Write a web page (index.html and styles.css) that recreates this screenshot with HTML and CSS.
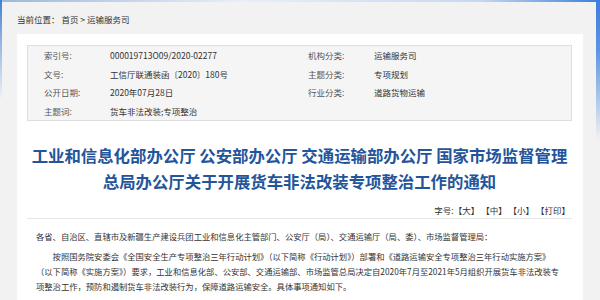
FILE: index.html
```html
<!DOCTYPE html>
<html lang="zh-CN">

<head>
    <meta charset="UTF-8">
    <meta name="viewport" content="width=device-width, initial-scale=1.0">
    <title>关于开展货车非法改装专项整治工作的通知</title>
    <link rel="stylesheet" href="styles.css">
</head>

<body>
    <div class="crumb">当前位置： <a href="#">首页</a> &gt; <a href="#">运输服务司</a></div>
    <div class="panel">
        <div class="meta">
            <span class="label">索引号:</span><span>000019713O09/2020-02277</span>
            <span class="label">机构分类:</span><span>运输服务司</span>
            <span class="label">文号:</span><span>工信厅联通装函〔2020〕180号</span>
            <span class="label">主题分类:</span><span>专项规划</span>
            <span class="label">公开日期:</span><span>2020年07月28日</span>
            <span class="label">行业分类:</span><span>道路货物运输</span>
            <span class="label">主题词:</span><span>货车非法改装;专项整治</span>
            <span></span><span></span>
        </div>
        <h1 class="title">工业和信息化部办公厅 公安部办公厅 交通运输部办公厅 国家市场监督管理<br>总局办公厅关于开展货车非法改装专项整治工作的通知</h1>
        <div class="tools">字号:<a href="#">【大】</a> <a href="#">【中】</a> <a href="#">【小】</a> <a href="#">【打印】</a></div>
        <div class="content">
            <p class="greet">各省、自治区、直辖市及新疆生产建设兵团工业和信息化主管部门、公安厅（局）、交通运输厅（局、委）、市场监督管理局：</p>
            <p class="para">按照国务院安委会《全国安全生产专项整治三年行动计划》（以下简称《行动计划》）部署和《道路运输安全专项整治三年行动实施方案》<br>（以下简称《实施方案》）要求，工业和信息化部、公安部、交通运输部、市场监管总局决定自2020年7月至2021年5月组织开展货车非法改装专<br>项整治工作，预防和遏制货车非法改装行为，保障道路运输安全。具体事项通知如下。</p>
        </div>
    </div>
</body>

</html>
```

FILE: styles.css
```css
html {
    background:
        linear-gradient(to bottom, #3f7fd6 0, #8fb2e4 40px, #f2f2f2 100px) left top / 2px 100% no-repeat,
        linear-gradient(to bottom, #3b7fdc 0, #5b95e0 50px, #f2f2f2 140px) right top / 4px 100% no-repeat,
        linear-gradient(to right, #9db8de 0, #e8eef6 40%, #c6d8f0 80%, #3b7fdc 100%) left top / 100% 2px no-repeat,
        #f2f2f2;
}

body {
    font-family: "Noto Sans CJK SC", "Noto Sans", sans-serif;
    margin: 0;
    padding: 0 17px;
    color: #333;
    min-height: 300px;
}

a {
    color: #333;
    text-decoration: none;
}

.crumb {
    height: 34px;
    line-height: 38px;
    font-size: 8.5px;
    color: #333;
}

.panel {
    background: #fff;
    padding: 11px 11px 20px 10px;
    min-height: 240px;
}

.meta {
    display: grid;
    grid-template-columns: 66px 198px 66px 1fr;
    grid-auto-rows: 18.5px;
    align-items: center;
    padding-left: 16px;
    background: #f5f5f5;
    border: 1px solid #dedede;
    font-size: 8.5px;
    color: #333;
}

.meta .label {
    color: #555;
}

.title {
    margin: 21px 0 0;
    text-align: center;
    font-size: 16.4px;
    line-height: 26px;
    font-weight: 700;
    color: #24549a;
}

.tools {
    margin-top: 8px;
    height: 16px;
    line-height: 16px;
    text-align: right;
    padding-right: 2px;
    font-size: 8.5px;
    border-bottom: 1px solid #e6e6e6;
}

.content {
    padding: 0 0 0 9px;
    font-size: 8.3px;
    line-height: 15px;
    color: #333;
    white-space: nowrap;
}

.content p {
    margin: 0;
}

.greet {
    margin-top: 10px !important;
}

.para {
    margin-top: 5px !important;
    text-indent: 2em;
}
```
